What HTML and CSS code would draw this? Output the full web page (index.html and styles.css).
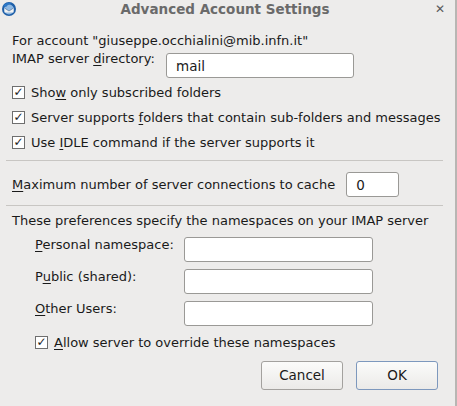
FILE: index.html
```html
<!DOCTYPE html>
<html>
<head>
<meta charset="utf-8">
<link rel="stylesheet" href="styles.css">
</head>
<body>
<div class="window">
  <div class="titlebar">
    <svg class="appicon" width="16" height="16" viewBox="0 0 16 16">
      <circle cx="8" cy="8" r="7" fill="#1f5fa8"/>
      <circle cx="8" cy="8.5" r="5" fill="#8fb9e3"/>
      <path d="M3.5 7 L8 10 L12.5 7 L12.5 11.5 L3.5 11.5 Z" fill="#f2f2f2"/>
      <path d="M3.5 7 L8 10 L12.5 7" stroke="#5b7da6" stroke-width="0.8" fill="none"/>
      <path d="M2 5 Q5 1 11 2 Q7 3 5 6 Z" fill="#2c78c7"/>
    </svg>
    <div class="title">Advanced Account Settings</div>
    <div class="close">✕</div>
  </div>
  <div class="content">
    <div class="line account">For account "giuseppe.occhialini@mib.infn.it"</div>
    <div class="row dirrow">
      <span class="label">IMAP server <u>d</u>irectory:</span>
      <div class="input dir">mail</div>
    </div>
    <div class="checks">
      <div class="check"><span class="box">✓</span><span>Sho<u>w</u> only subscribed folders</span></div>
      <div class="check"><span class="box">✓</span><span>Server supports <u>f</u>olders that contain sub-folders and messages</span></div>
      <div class="check"><span class="box">✓</span><span>Use <u>I</u>DLE command if the server supports it</span></div>
    </div>
    <div class="sep"></div>
    <div class="row maxrow">
      <span class="label"><u>M</u>aximum number of server connections to cache</span>
      <div class="input small">0</div>
    </div>
    <div class="sep"></div>
    <div class="line prefs">These preferences specify the namespaces on your IMAP server</div>
    <div class="ns">
      <span class="nslabel"><u>P</u>ersonal namespace:</span><div class="input ninput"></div>
      <span class="nslabel">P<u>u</u>blic (shared):</span><div class="input ninput"></div>
      <span class="nslabel"><u>O</u>ther Users:</span><div class="input ninput"></div>
    </div>
    <div class="check allow"><span class="box">✓</span><span><u>A</u>llow server to override these namespaces</span></div>
    <div class="buttons">
      <div class="btn">Cancel</div>
      <div class="btn ok">OK</div>
    </div>
  </div>
</div>
</body>
</html>
```
FILE: styles.css
```css
html, body {
  margin: 0;
  padding: 0;
}
body {
  width: 457px;
  height: 406px;
  background: #edeceb;
  font-family: "DejaVu Sans", sans-serif;
  font-size: 13px;
  color: #1a1a1a;
  overflow: hidden;
}
.window {
  width: 455px;
  height: 406px;
  border-right: 2px solid #b8b6b3;
  display: flex;
  flex-direction: column;
}
.titlebar {
  height: 18px;
  display: flex;
  align-items: center;
  padding: 0 0 0 1px;
}
.appicon {
  flex: none;
}
.title {
  flex: 1;
  text-align: center;
  font-weight: bold;
  font-size: 13.5px;
  color: #6a6a6a;
  padding-left: 4px;
}
.close {
  width: 22px;
  text-align: center;
  color: #5a5a5a;
  font-size: 12px;
  font-weight: bold;
  margin-right: 4px;
}
.content {
  padding: 0 0 0 12px;
  display: flex;
  flex-direction: column;
}
u {
  text-decoration: underline;
  text-underline-offset: 2px;
}
.account {
  margin-top: 14px;
  height: 18px;
  line-height: 18px;
}
.row {
  display: flex;
  align-items: center;
}
.dirrow {
  margin-top: 1px;
  height: 25px;
}
.dirrow .label {
  width: 154px;
  align-self: flex-start;
  line-height: 16px;
}
.input {
  box-sizing: border-box;
  height: 25px;
  background: #fff;
  border: 1px solid #9a9996;
  border-radius: 3px;
  padding: 0 0 0 9px;
  line-height: 24px;
  font-size: 13.5px;
}
.dir {
  width: 188px;
  margin-top: 3px;
}
.checks {
  margin-top: 7px;
  display: flex;
  flex-direction: column;
  gap: 7px;
}
.check {
  display: flex;
  align-items: center;
  height: 18px;
}
.box {
  box-sizing: border-box;
  width: 13px;
  height: 13px;
  border: 1px solid #6e6e6e;
  background: #fff;
  font-size: 12px;
  line-height: 11px;
  text-align: center;
  font-weight: bold;
  color: #222;
  margin-right: 6px;
}
.sep {
  height: 1px;
  background: #c8c6c3;
  margin-right: 12px;
  margin-left: -6px;
}
.checks + .sep {
  margin-top: 9px;
}
.maxrow {
  margin-top: 10px;
  height: 26px;
}
.maxrow .label {
  margin-right: 11px;
}
.small {
  width: 53px;
  padding-left: 9px;
}
.maxrow + .sep {
  margin-top: 8px;
}
.prefs {
  margin-top: 6px;
  height: 18px;
  line-height: 18px;
}
.ns {
  display: grid;
  grid-template-columns: 149px 189px;
  row-gap: 7px;
  margin-left: 23px;
  margin-top: 7px;
}
.nslabel {
  line-height: 16px;
}
.ninput {
  width: 189px;
  height: 25px;
}
.allow {
  margin-left: 23px;
  margin-top: 7px;
}
.buttons {
  display: flex;
  justify-content: flex-end;
  gap: 13px;
  margin-top: 10px;
  margin-right: 17px;
}
.btn {
  box-sizing: border-box;
  width: 82px;
  height: 29px;
  border: 1px solid #a3a19e;
  border-radius: 3px;
  background: linear-gradient(#fbfbfa, #ebeae8);
  text-align: center;
  line-height: 27px;
  font-size: 13.5px;
}
.ok {
  border-color: #7d98bd;
}
```
